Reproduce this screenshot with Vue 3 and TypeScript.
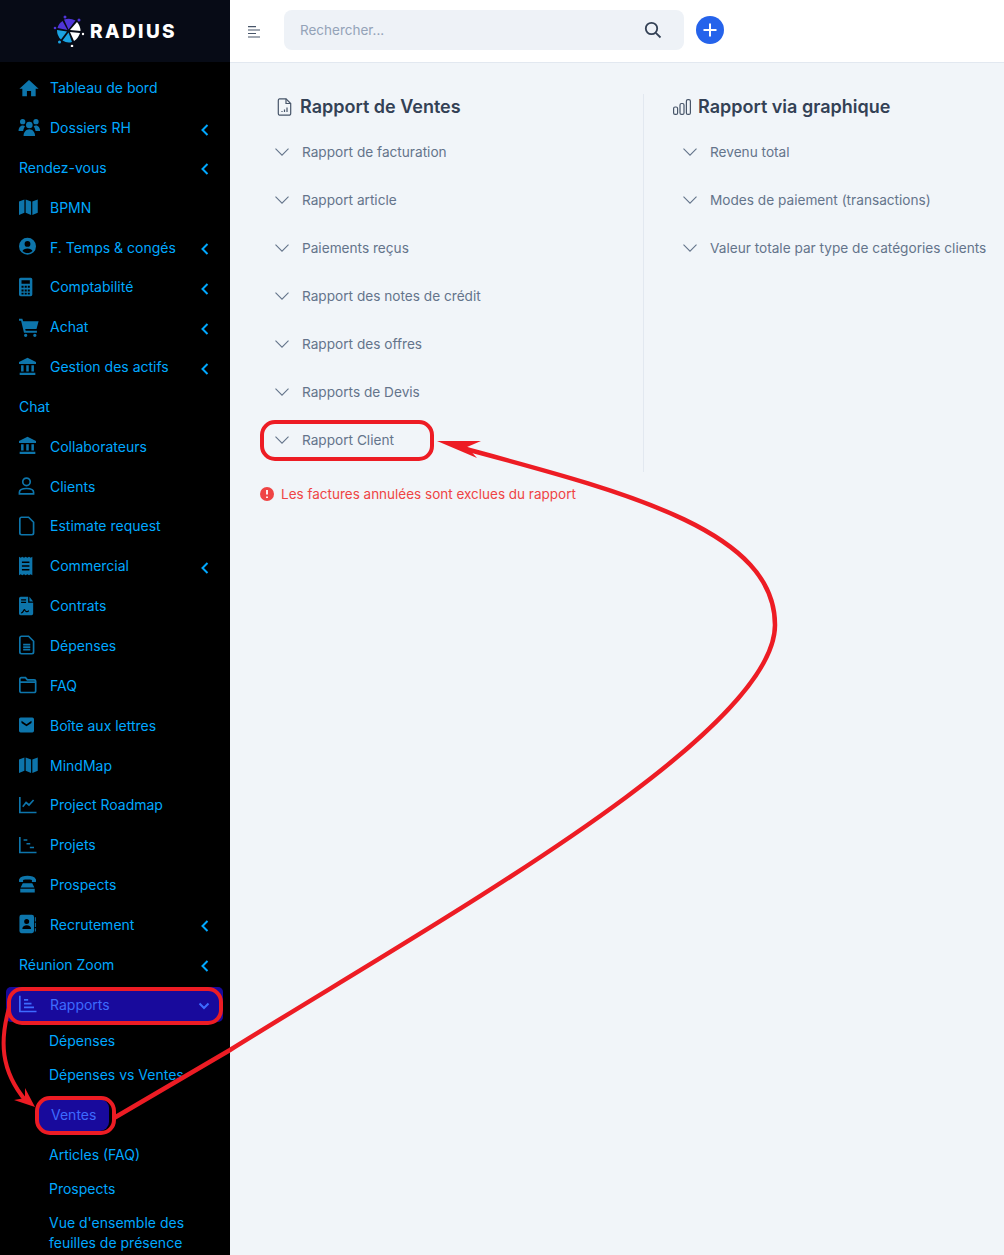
<template>
  <div class="page">
    <aside class="sidebar">
      <div class="logo">
        <svg class="logo-mark" viewBox="0 0 32 32" width="32" height="32">
          <path d="M15.5 14.5 L11 4.5 Q17 2.5 22.5 5.5 Z" fill="#4f35d8" />
          <path d="M14.5 15 L9.5 6 Q5.5 8.5 4.5 13 Z" fill="#4f35d8" />
          <path d="M14 16.5 L4 15 Q4 21 8 24.5 Z" fill="#1ba3e2" />
          <path d="M15.5 17.5 L9.5 25.5 Q14 28.5 19 27 Z" fill="#1ba3e2" />
          <path d="M17 17 L21 26 Q25.5 23 27 18 Z" fill="#fff" />
          <path d="M17 15 L24 7 Q27.5 11 27.5 16 Z" fill="#fff" />
          <circle cx="12" cy="2" r="1.5" fill="#4f35d8" />
          <circle cx="26" cy="5" r="1.5" fill="#4f35d8" />
          <circle cx="2" cy="13" r="1.3" fill="#4f35d8" />
          <circle cx="6.5" cy="27" r="1.5" fill="#1ba3e2" />
          <circle cx="19" cy="31" r="1.3" fill="#fff" />
          <circle cx="30" cy="19" r="1.2" fill="#fff" />
        </svg>
        <span class="logo-text">RADIUS</span>
      </div>

      <nav class="menu">
        <a v-for="item in menu" :key="item.label" class="menu-item" :class="{ active: item.active }">
          <svg v-if="item.icon" class="menu-icon" :viewBox="viewBoxes[item.icon] || '0 0 24 24'">
            <path
              :d="icons[item.icon]"
              :fill="outlined.includes(item.icon) ? 'none' : 'currentColor'"
              :stroke="outlined.includes(item.icon) ? 'currentColor' : 'none'"
              stroke-width="2"
              fill-rule="evenodd"
            />
          </svg>
          <span class="menu-label">{{ item.label }}</span>
          <svg v-if="item.active" class="caret-down" viewBox="0 0 12 8">
            <path d="M1.5 1.5 6 6l4.5-4.5" />
          </svg>
          <svg v-else-if="item.sub" class="caret" viewBox="0 0 8 12">
            <path d="M6.5 1 1.5 6l5 5" />
          </svg>
        </a>
      </nav>

      <div class="submenu">
        <a v-for="sub in submenu" :key="sub.label" class="sub-item" :class="{ active: sub.active }">{{ sub.label }}</a>
      </div>
    </aside>

    <main class="main">
      <header class="topbar">
        <svg class="burger" viewBox="0 0 12 12" width="12" height="12">
          <path d="M0 .6h8M0 4h12M0 7.5h8M0 11h12" />
        </svg>
        <div class="search">
          <span class="search-text">Rechercher...</span>
          <svg class="search-icon" viewBox="0 0 18 18" width="18" height="18">
            <circle cx="7.5" cy="7.5" r="5.7" />
            <path d="M11.8 11.8 16.5 16.5" />
          </svg>
        </div>
        <button class="add">
          <svg viewBox="0 0 14 14" width="14" height="14"><path d="M7 .5v13M.5 7h13" /></svg>
        </button>
      </header>

      <section class="content">
        <div class="columns">
          <div class="col col-left">
            <h2 class="col-title">
              <svg class="title-icon" viewBox="0 0 14 18" width="15" height="18">
                <path d="M2 .8h6.5l4.7 4.7v10a1.7 1.7 0 0 1-1.7 1.7H2A1.7 1.7 0 0 1 .8 15.5V2.5A1.7 1.7 0 0 1 2 .8Z" />
                <path d="M8.5 .8v4.7h4.7M4.5 14v-1M7 14v-2.500M9.500 14V9.500" />
              </svg>
              Rapport de Ventes
            </h2>
            <a v-for="r in salesReports" :key="r" class="report">
              <svg class="report-chevron" viewBox="0 0 14 8"><path d="M.5 .7 7 7.200 13.500 .7" /></svg>
              {{ r }}
            </a>
          </div>
          <div class="col col-right">
            <h2 class="col-title">
              <svg class="title-icon" viewBox="0 0 18 16" width="18" height="16">
                <rect x=".6" y="8" width="4" height="7.4" rx="1.5" />
                <rect x="7" y="4.5" width="4" height="10.9" rx="1.5" />
                <rect x="13.4" y=".6" width="4" height="14.8" rx="1.5" />
              </svg>
              Rapport via graphique
            </h2>
            <a v-for="r in chartReports" :key="r" class="report">
              <svg class="report-chevron" viewBox="0 0 14 8"><path d="M.5 .7 7 7.200 13.500 .7" /></svg>
              {{ r }}
            </a>
          </div>
        </div>
        <p class="alert">
          <svg viewBox="0 0 14 14" width="14" height="14">
            <circle cx="7" cy="7" r="7" fill="#ef4444" />
            <path d="M7 3v4.500M7 9.500V11" stroke="#fff" stroke-width="1.8" />
          </svg>
          Les factures annulées sont exclues du rapport
        </p>
      </section>
    </main>

    <!-- annotations posees par dessus la capture -->
    <svg class="annotations" viewBox="0 0 1004 1255" width="1004" height="1255">
      <g fill="none" stroke="#ed1c24" stroke-width="4">
        <rect x="9" y="989" width="212" height="34" rx="13" />
        <rect x="37" y="1098" width="77" height="35" rx="13" />
        <rect x="262" y="422" width="170" height="37" rx="13" />
        <path stroke-width="4.500" d="M114 1118 L230 1050 C430 925 775 735 775 625 C775 530 625 492 462 448" />
        <path d="M9 1008 C0 1040 0 1070 26 1101" />
      </g>
      <path d="M437 441 L481 441 L467 447 L477 458 Z" fill="#ed1c24" />
      <path d="M35 1107 L14 1100 L25 1098 L25 1088 Z" fill="#ed1c24" />
    </svg>
  </div>
</template>

<script setup lang="ts">
interface MenuItem {
  label: string;
  icon?: string;
  sub?: boolean;
  active?: boolean;
}

const mapIcon = "M0 5.5 6.500 3v16L0 21.500ZM8 3l6.500 2.500v16L8 19ZM16 5.500 22.500 3v16L16 21.500Z";
const bankIcon = "M10.2 1 20.400 6V8.500H0V6ZM2.500 10h3v7.500h-3Zm6.200 0h3v7.500h-3Zm6.200 0h3v7.500h-3ZM.8 19h18.800v2.500H.8Z";

const icons: Record<string, string> = {
  home: "M12 2.500 23.500 13H20v9h-5.500v-6.500h-5V22H4v-9H.5Z",
  users:
    "M4.400 1.200a3.200 3.200 0 1 1 0 6.400 3.200 3.200 0 0 1 0-6.400Zm16 0a3.200 3.200 0 1 1 0 6.400 3.200 3.200 0 0 1 0-6.400ZM12.400 4.400a4 4 0 1 1 0 8 4 4 0 0 1 0-8ZM-.5 15.500c0-3.500 2-6.500 5-6.500 1.200 0 2 .3 2.700.8-1 1.500-2 3.500-2.200 5.700Zm25.800 0c0-3.500-2-6.500-5-6.500-1.200 0-2 .3-2.700.8 1 1.500 2 3.500 2.200 5.700ZM5.500 21.600c0-4.500 3-8 6.900-8s6.900 3.500 6.900 8Z",
  map: mapIcon,
  account:
    "M10.200 .8a10.200 10.200 0 1 1 0 20.400 10.200 10.200 0 0 1 0-20.400Zm0 4a3.500 3.500 0 1 0 0 7 3.500 3.500 0 0 0 0-7Zm0 9c-2.800 0-5.500 1.200-6 3 1.500 1.500 3.600 2.500 6 2.500s4.500-1 6-2.500c-.5-1.800-3.200-3-6-3Z",
  calc: "M6 1h12a2 2 0 0 1 2 2v18a2 2 0 0 1-2 2H6a2 2 0 0 1-2-2V3a2 2 0 0 1 2-2Zm1 3v4h10V4Zm0 6.500V13h2.500v-2.500Zm3.800 0V13h2.500v-2.500Zm3.700 0V13H17v-2.500ZM7 15v2.500h2.500V15Zm3.800 0v2.500h2.500V15Zm3.700 0v2.500H17V15ZM7 19v2h2.500v-2Zm3.800 0v2h2.500v-2Zm3.700 0v2H17v-2Z",
  cart: "M0 2h4l1 3h18.500L21 14.500H7.500l.5 2h13.500V19H6L2.500 4.500H0ZM8 20a2 2 0 1 1 0 4 2 2 0 0 1 0-4Zm11 0a2 2 0 1 1 0 4 2 2 0 0 1 0-4Z",
  bank: bankIcon,
  person: "M12 2.500a4.500 4.500 0 1 1 0 9 4.500 4.500 0 0 1 0-9ZM3.500 21.500v-2c0-3 3.800-4.500 8.500-4.500s8.500 1.500 8.500 4.500v2Z",
  file: "M5.500 1.500H14L20 7.500V20.500a2 2 0 0 1-2 2H5.500a2 2 0 0 1-2-2v-17a2 2 0 0 1 2-2Z",
  receipt:
    "M4 1l2 1.200L8 1l2 1.200L12 1l2 1.200L16 1l2 1.200L20 1v22l-2-1.200L16 23l-2-1.200L12 23l-2-1.200L8 23l-2-1.200L4 23ZM7.500 6.500v2h9v-2Zm0 4.500v2h9v-2Zm0 4.500v2h9v-2Z",
  contract:
    "M5 1h9v7h6v13a2 2 0 0 1-2 2H5a2 2 0 0 1-2-2V3a2 2 0 0 1 2-2Zm10.500 0L20 6.500h-4.500ZM5.500 4v1.500h6V4Zm0 3v1.500h6V7Zm0 12.500c2 0 2.500-4 4-4s1 2.500 2.500 2.500 1.500-1 3-1v1.500c-1 0-1.500 1-3 1s-2-2-2.500-2-1 3.500-4 3.500Z",
  doc: "M5.500 1.500H14L20 7.500V20.500a2 2 0 0 1-2 2H5.500a2 2 0 0 1-2-2v-17a2 2 0 0 1 2-2ZM7.500 11.500H16M7.500 14.500H16M7.500 17.500H16",
  folder:
    "M1 5a1.800 1.800 0 0 1 1.800-1.800h5L10 5.800h8.200A1.800 1.800 0 0 1 20 7.600v11.600a1.800 1.800 0 0 1-1.800 1.800H2.800A1.800 1.800 0 0 1 1 19.200ZM1 8.500h19",
  mail: "M2 3h14a2 2 0 0 1 2 2v14a2 2 0 0 1-2 2H2a2 2 0 0 1-2-2V5a2 2 0 0 1 2-2Zm1 4v2.500l6 4 6-4V7l-6 4Z",
  line: "M1 2.500V21h20M4.500 14l4-5 3.500 3 5.500-6",
  gantt: "M1 2.500V21h20M5.500 6H10M9 10.500h4.500M13 15h5",
  phone:
    "M10.200 1c4.500 0 8.700 1.300 10 4 .3.800.3 2.500 0 3.500h-4.700V6c-2.500-.8-8-.8-10.600 0v2.500H.2C-.1 7.500-.1 5.800.2 5c1.300-2.700 5.500-4 10-4ZM4.500 10h11.400l2.500 5H2ZM1.500 16.500h17.400V21H1.500Z",
  contact:
    "M3 1h12.500A2.500 2.500 0 0 1 18 3.500v17a2.500 2.500 0 0 1-2.500 2.500H3A2.500 2.500 0 0 1 .5 20.500v-17A2.500 2.500 0 0 1 3 1Zm6.200 5a3 3 0 1 0 0 6 3 3 0 0 0 0-6ZM4 18h10.500c0-3-2.300-4.500-5.200-4.500S4 15 4 18ZM19 4h1.200v5H19Zm0 6.500h1.200v5H19Zm0 6.500h1.200v4H19Z",
  bars: "M1 2v19h20M6 7h5M6 11.500h9M6 16h12",
};

// decalage vers la gauche des icones plus etroites
const viewBoxes: Record<string, string> = {
  calc: "4 0 24 24",
  person: "3 0 24 24",
  file: "2.500 0 24 24",
  doc: "2.500 0 24 24",
  receipt: "4 0 24 24",
  contract: "3 0 24 24",
};

// ces icones sont tracees, les autres remplies
const outlined = ["person", "file", "doc", "folder", "line", "gantt", "bars"];

const menu: MenuItem[] = [
  { label: "Tableau de bord", icon: "home" },
  { label: "Dossiers RH", icon: "users", sub: true },
  { label: "Rendez-vous", sub: true },
  { label: "BPMN", icon: "map" },
  { label: "F. Temps & congés", icon: "account", sub: true },
  { label: "Comptabilité", icon: "calc", sub: true },
  { label: "Achat", icon: "cart", sub: true },
  { label: "Gestion des actifs", icon: "bank", sub: true },
  { label: "Chat" },
  { label: "Collaborateurs", icon: "bank" },
  { label: "Clients", icon: "person" },
  { label: "Estimate request", icon: "file" },
  { label: "Commercial", icon: "receipt", sub: true },
  { label: "Contrats", icon: "contract" },
  { label: "Dépenses", icon: "doc" },
  { label: "FAQ", icon: "folder" },
  { label: "Boîte aux lettres", icon: "mail" },
  { label: "MindMap", icon: "map" },
  { label: "Project Roadmap", icon: "line" },
  { label: "Projets", icon: "gantt" },
  { label: "Prospects", icon: "phone" },
  { label: "Recrutement", icon: "contact", sub: true },
  { label: "Réunion Zoom", sub: true },
  { label: "Rapports", icon: "bars", sub: true, active: true },
];

const submenu = [
  { label: "Dépenses" },
  { label: "Dépenses vs Ventes" },
  { label: "Ventes", active: true },
  { label: "Articles (FAQ)" },
  { label: "Prospects" },
  { label: "Vue d'ensemble des feuilles de présence" },
];

const salesReports = [
  "Rapport de facturation",
  "Rapport article",
  "Paiements reçus",
  "Rapport des notes de crédit",
  "Rapport des offres",
  "Rapports de Devis",
  "Rapport Client",
];

const chartReports = [
  "Revenu total",
  "Modes de paiement (transactions)",
  "Valeur totale par type de catégories clients",
];
</script>

<style scoped>
.page {
  position: relative;
  display: flex;
  width: 1004px;
  height: 1255px;
  overflow: hidden;
  font-family: Inter, "Liberation Sans", sans-serif;
  font-size: 14px;
  background: #f1f5f9;
}

.sidebar {
  flex: 0 0 230px;
  background: #000;
  color: #00a8ff;
}

.logo {
  display: flex;
  align-items: center;
  justify-content: center;
  gap: 5px;
  height: 62px;
  background: #070b16;
}

.logo-text {
  font-size: 19px;
  font-weight: 800;
  letter-spacing: 2.4px;
  color: #fff;
}

.menu {
  padding-top: 5.75px;
}

.menu-item {
  display: flex;
  align-items: center;
  height: 39.857px;
  padding: 0 19px;
}

.menu-icon {
  flex: 0 0 20px;
  width: 20px;
  height: 20px;
  margin-right: 11px;
  color: #0d75ab;
  overflow: visible;
}

.menu-label {
  flex: 1;
}

.caret {
  width: 8px;
  height: 12px;
  margin: 4px 2px 0 0;
  fill: none;
  stroke: #00a8ff;
  stroke-width: 2;
}

.menu-item.active {
  height: 35px;
  margin: 2.5px 7px 2.35px 6px;
  padding: 0 13px;
  border-radius: 5px;
  background: #180a9c;
  color: #3d6bff;
}

.menu-item.active .menu-icon {
  color: #3d6bff;
}

.caret-down {
  width: 12px;
  height: 8px;
  margin-top: 4px;
  fill: none;
  stroke: #3d6bff;
  stroke-width: 2;
}

.submenu {
  display: flex;
  flex-direction: column;
  align-items: flex-start;
  padding-left: 49px;
}

.sub-item {
  line-height: 20px;
  padding: 7px 40px 7px 0;
}

.sub-item.active {
  line-height: 32px;
  margin: 7px 0 7px -11px;
  padding: 0 13px;
  border-radius: 9px;
  background: #180a9c;
  color: #3d6bff;
}

.main {
  flex: 1;
  min-width: 0;
}

.topbar {
  display: flex;
  align-items: center;
  box-sizing: border-box;
  height: 63px;
  padding: 0 0 2px 18px;
  border-bottom: 1px solid #e2e8f0;
  background: #fff;
}

.burger {
  fill: none;
  stroke: #475569;
  stroke-width: 1.2;
  margin: 3px 24px 0 0;
}

.search {
  display: flex;
  align-items: center;
  justify-content: space-between;
  box-sizing: border-box;
  width: 400px;
  height: 40px;
  padding: 0 22px 0 16px;
  border-radius: 8px;
  background: #eef2f7;
}

.search-text {
  color: #94a3b8;
  font-size: 13.5px;
}

.search-icon {
  fill: none;
  stroke: #334155;
  stroke-width: 1.8;
}

.add {
  display: flex;
  align-items: center;
  justify-content: center;
  width: 28px;
  height: 28px;
  margin-left: 12px;
  padding: 0;
  border: none;
  border-radius: 50%;
  background: #2563eb;
}

.add svg {
  stroke: #fff;
  stroke-width: 2;
}

.content {
  padding: 31px 0 0 30px;
}

.columns {
  display: flex;
  height: 378px;
}

.col {
  box-sizing: border-box;
}

.col-left {
  flex: 0 0 384px;
  border-right: 1px solid #e2e8f0;
}

.col-right {
  padding-left: 29px;
  white-space: nowrap;
}

.col-title {
  display: flex;
  align-items: center;
  height: 25px;
  margin: 0 0 9px;
  color: #334155;
  font-size: 18px;
  font-weight: 600;
}

.col-left .col-title {
  padding-left: 17px;
}

.col-left .title-icon {
  margin-right: 8px;
}

.col-right .title-icon {
  margin-right: 7px;
}

.title-icon {
  fill: none;
  stroke: #475569;
  stroke-width: 1.2;
}

.report {
  display: flex;
  align-items: center;
  height: 48px;
  color: #64748b;
  font-size: 13.65px;
}

.col-left .report {
  padding-left: 15px;
}

.col-right .report {
  padding-left: 10px;
}

.report-chevron {
  flex: 0 0 14px;
  width: 14px;
  height: 8px;
  margin-right: 13px;
  fill: none;
  stroke: #64748b;
  stroke-width: 1.1;
}

.alert {
  display: flex;
  align-items: center;
  gap: 7px;
  height: 20px;
  margin: 12px 0 0;
  color: #ef4444;
  font-size: 13.5px;
}

.annotations {
  position: absolute;
  top: 0;
  left: 0;
  pointer-events: none;
}
</style>
